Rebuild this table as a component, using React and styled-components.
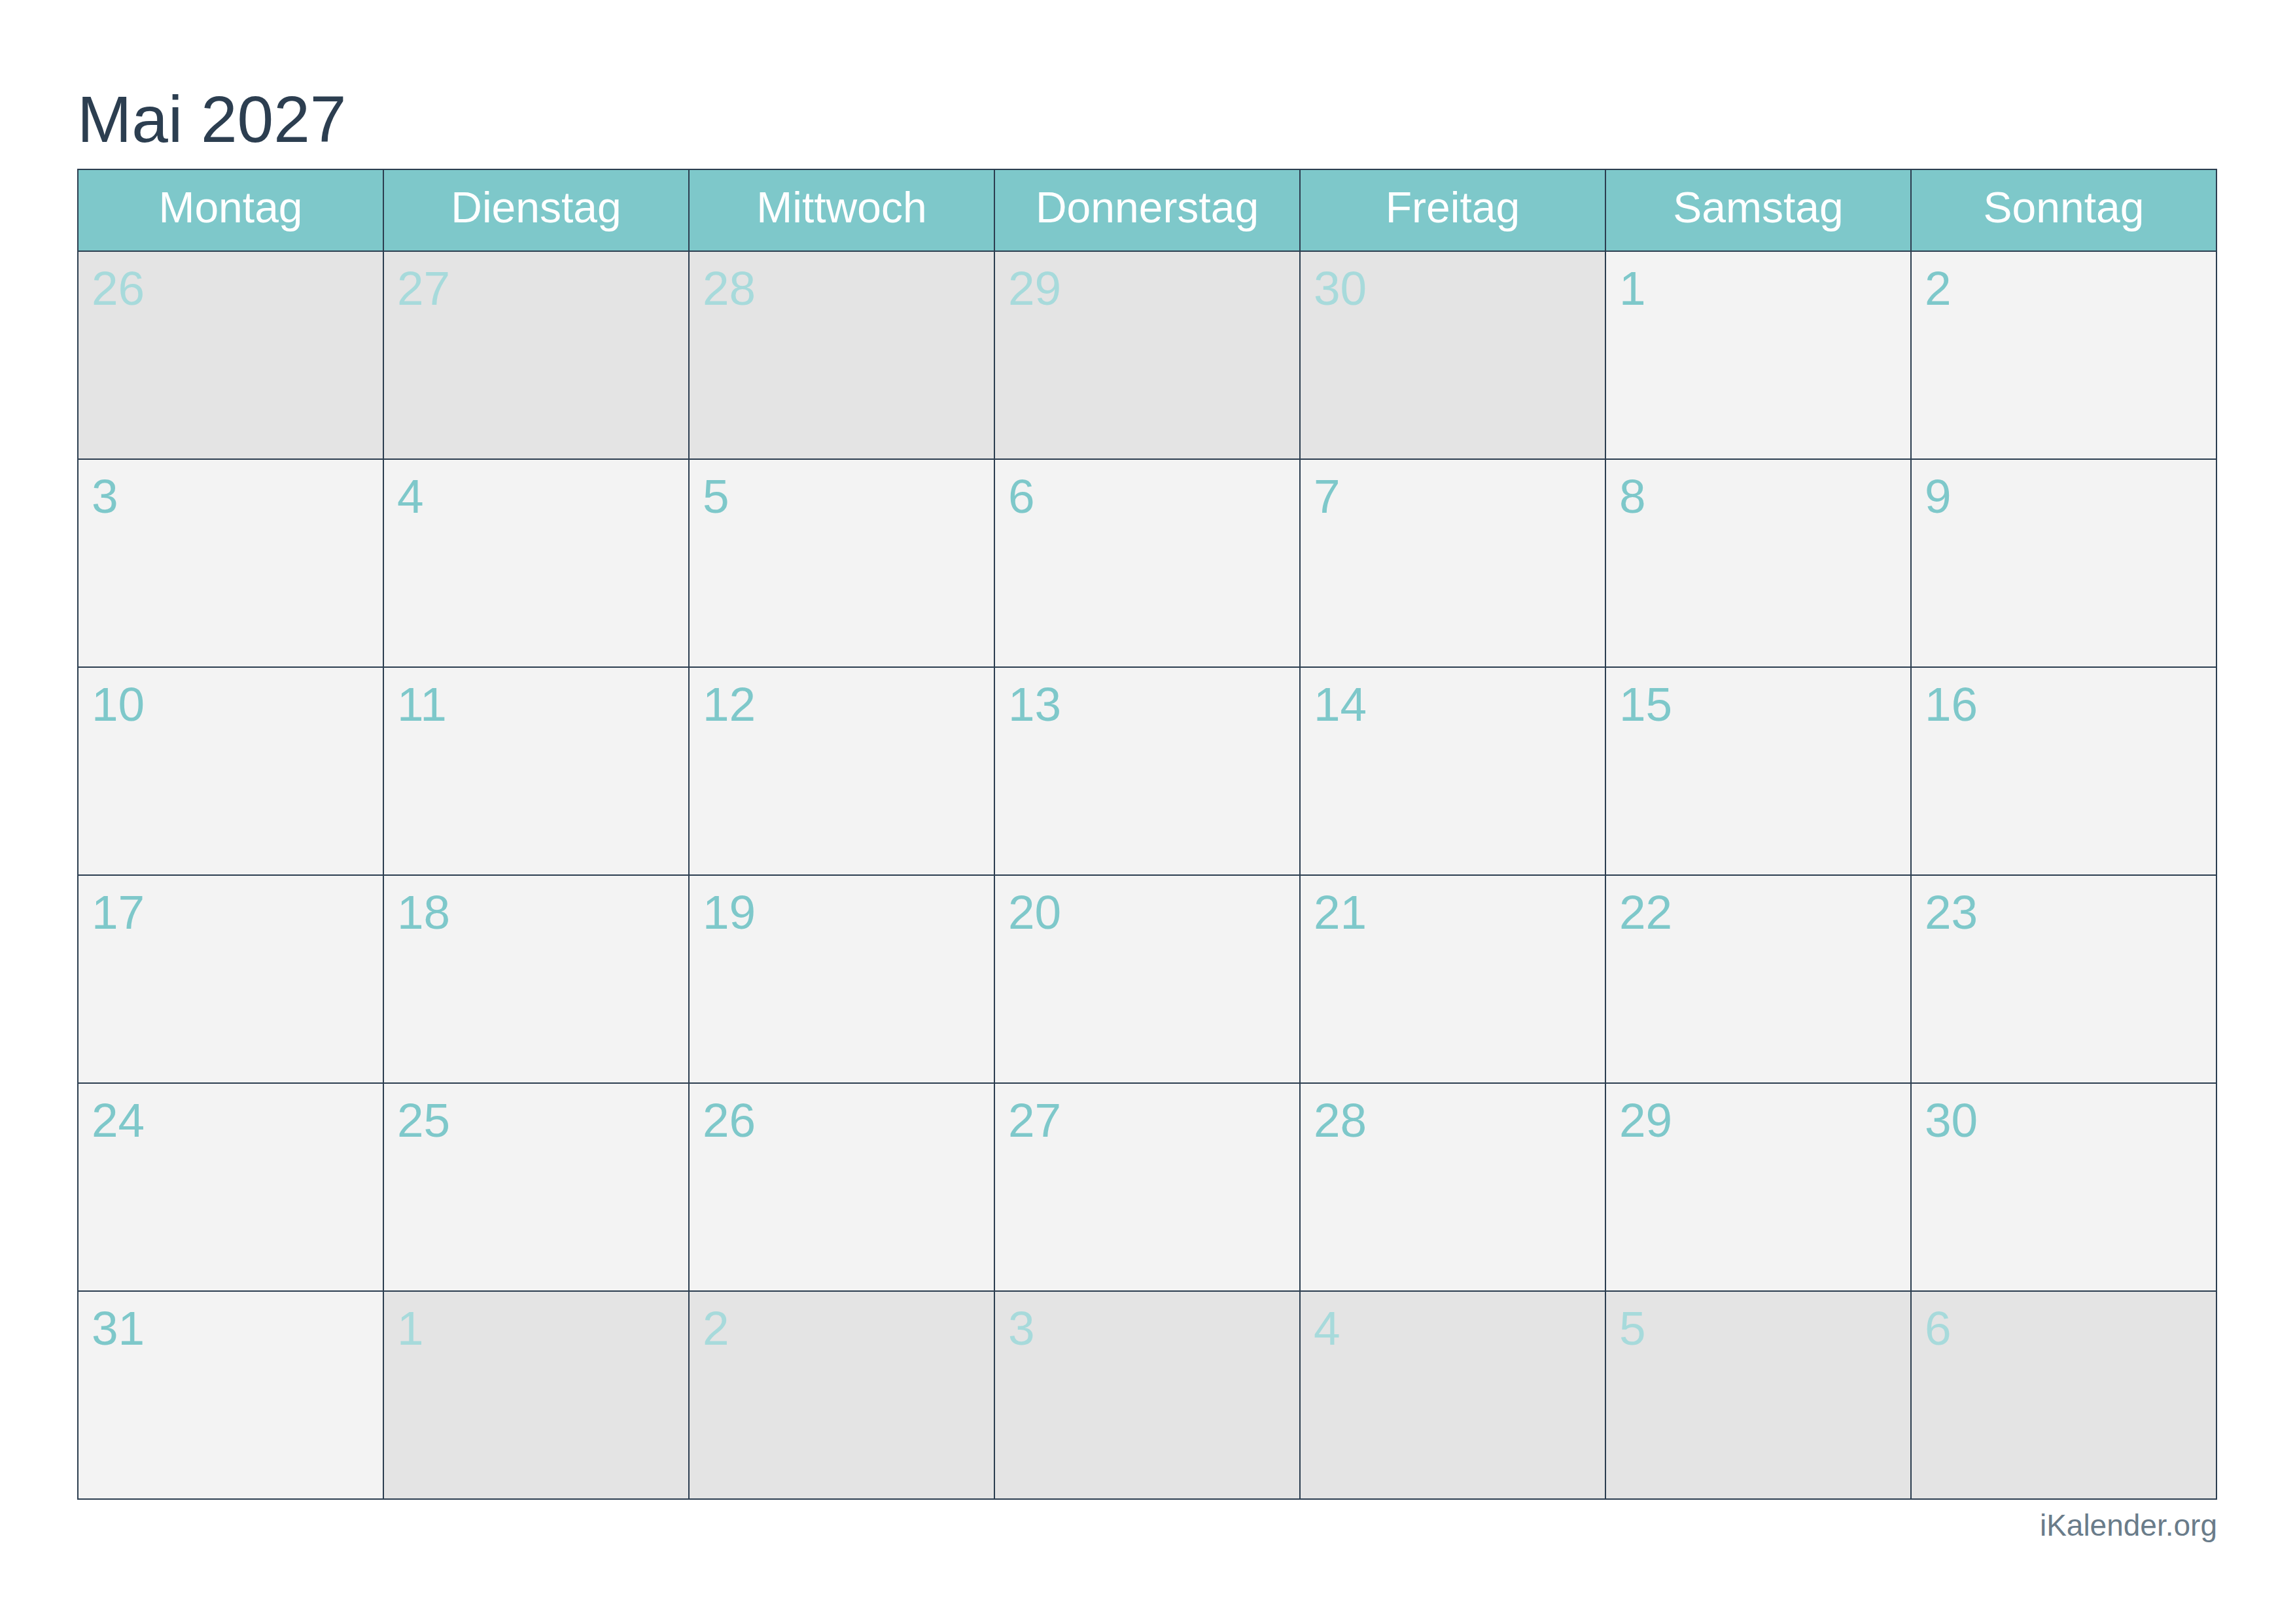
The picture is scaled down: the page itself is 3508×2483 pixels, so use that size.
import React from 'react';
import styled, { createGlobalStyle } from 'styled-components';

const GlobalStyle = createGlobalStyle`
  html, body {
    margin: 0;
    padding: 0;
    background: #ffffff;
  }
  * {
    box-sizing: border-box;
  }
`;

const Page = styled.div`
  width: 3508px;
  height: 2483px;
  padding: 132px 119px 0 118px;
  font-family: "Liberation Sans", Arial, Helvetica, sans-serif;
  display: flex;
  flex-direction: column;
`;

const Title = styled.h1`
  margin: 0 0 26px;
  font-size: 100px;
  line-height: 1;
  font-weight: 400;
  color: #2c3e50;
`;

const Table = styled.div`
  display: grid;
  grid-template-columns: repeat(7, 1fr);
  grid-template-rows: 125px repeat(6, 318px);
  border-top: 2px solid #2c3e50;
  border-left: 2px solid #2c3e50;
`;

const HeadCell = styled.div`
  display: flex;
  align-items: center;
  justify-content: center;
  padding-bottom: 9px;
  background: #7ec8ca;
  color: #ffffff;
  font-size: 66px;
  line-height: 1;
  border-right: 2px solid #2c3e50;
  border-bottom: 2px solid #2c3e50;
`;

const DayCell = styled.div`
  padding: 19px 20px 0;
  background: ${(p) => (p.$muted ? '#e4e4e4' : '#f3f3f3')};
  border-right: 2px solid #2c3e50;
  border-bottom: 2px solid #2c3e50;
`;

const DayNumber = styled.span`
  display: block;
  font-size: 73px;
  line-height: 1;
  color: ${(p) => (p.$muted ? '#a7dadb' : '#7ec8ca')};
`;

const Footer = styled.div`
  margin-top: 16px;
  text-align: right;
  font-size: 46px;
  line-height: 1;
  color: #6a7c8a;
`;

const weekdays = ['Montag', 'Dienstag', 'Mittwoch', 'Donnerstag', 'Freitag', 'Samstag', 'Sonntag'];

// April 26 .. June 6, 2027 (Monday start)
const buildDays = () => {
  const days = [];
  for (let d = 26; d <= 30; d++) days.push({ n: d, muted: true });
  for (let d = 1; d <= 31; d++) days.push({ n: d, muted: false });
  for (let d = 1; d <= 6; d++) days.push({ n: d, muted: true });
  return days;
};

const App = () => {
  const days = buildDays();

  return (
    <>
      <GlobalStyle />
      <Page>
        <Title>Mai 2027</Title>
        <Table>
          {weekdays.map((w) => (
            <HeadCell key={w}>{w}</HeadCell>
          ))}
          {days.map((day, i) => (
            <DayCell key={i} $muted={day.muted}>
              <DayNumber $muted={day.muted}>{day.n}</DayNumber>
            </DayCell>
          ))}
        </Table>
        <Footer>iKalender.org</Footer>
      </Page>
    </>
  );
};

export default App;
